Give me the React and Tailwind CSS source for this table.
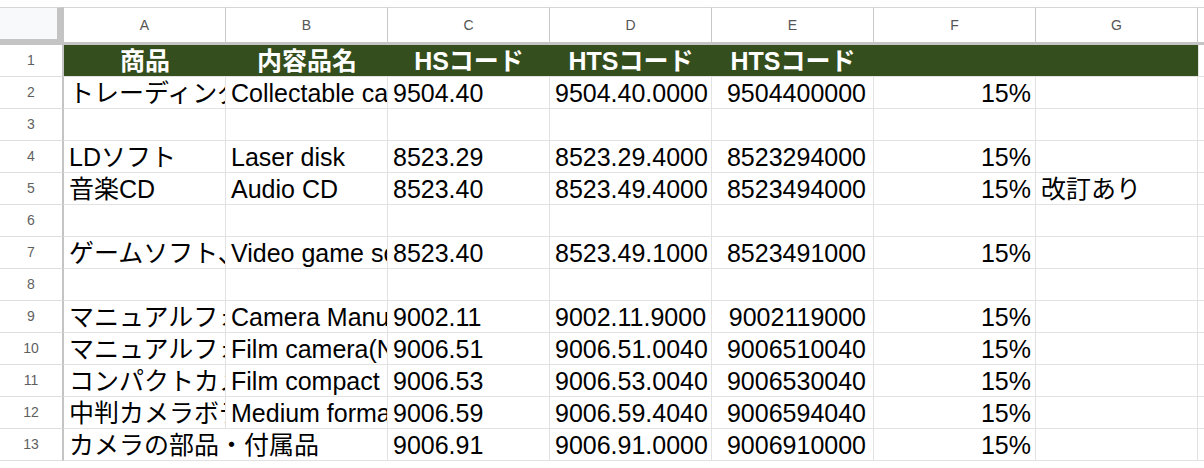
import React from 'react'

const GREEN = 'bg-[#344e1d]'

const letters = ['A', 'B', 'C', 'D', 'E', 'F', 'G']

const headings = ['商品', '内容品名', 'HSコード', 'HTSコード', 'HTSコード', '', '']

const rows = [
  { n: 2, a: 'トレーディングカード', b: 'Collectable card game', c: '9504.40', d: '9504.40.0000', e: '9504400000', f: '15%' },
  { n: 3 },
  { n: 4, a: 'LDソフト', b: 'Laser disk', c: '8523.29', d: '8523.29.4000', e: '8523294000', f: '15%' },
  { n: 5, a: '音楽CD', b: 'Audio CD', c: '8523.40', d: '8523.49.4000', e: '8523494000', f: '15%', g: '改訂あり' },
  { n: 6 },
  { n: 7, a: 'ゲームソフト、ゲーム機', b: 'Video game software', c: '8523.40', d: '8523.49.1000', e: '8523491000', f: '15%' },
  { n: 8 },
  { n: 9, a: 'マニュアルフォーカスカメラ', b: 'Camera Manual focus', c: '9002.11', d: '9002.11.9000', e: '9002119000', f: '15%' },
  { n: 10, a: 'マニュアルフォーカスフィルム', b: 'Film camera(Non-AF)', c: '9006.51', d: '9006.51.0040', e: '9006510040', f: '15%' },
  { n: 11, a: 'コンパクトカメラ', b: 'Film compact camera', c: '9006.53', d: '9006.53.0040', e: '9006530040', f: '15%' },
  { n: 12, a: '中判カメラボディ', b: 'Medium format camera', c: '9006.59', d: '9006.59.4040', e: '9006594040', f: '15%' },
  { n: 13, a: 'カメラの部品・付属品', span: true, c: '9006.91', d: '9006.91.0000', e: '9006910000', f: '15%' },
]

const RowNum = ({ n }) => (
  <div className="h-8 flex items-center justify-center border-b border-[#dedede] border-r-2 border-r-[#c4c4c4] text-[14px] text-[#5f5f5f]">
    {n}
  </div>
)

const Cell = ({ children, right, span, pr = 'pr-[5px]' }) => (
  <div
    className={`h-8 flex items-center overflow-hidden whitespace-nowrap border-b border-r border-[#e2e2e2] text-[25px] leading-[28px] text-black ${
      right ? `justify-end ${pr}` : 'pl-[5px]'
    } ${span ? 'col-span-2' : ''}`}
  >
    {children}
  </div>
)

export default function App() {
  return (
    <div className="w-[1204px] h-[468px] overflow-hidden bg-white font-['Liberation_Sans','Noto_Sans_CJK_JP',sans-serif]">
      <div className="h-[7px]" />

      {/* column letters */}
      <div className="grid grid-cols-[64px_repeat(7,162px)_1fr]">
        <div className="h-[38px] bg-[#f8f9fa] border-t border-t-[#d6d6d6] border-r-[7px] border-b-[6px] border-[#c4c4c4]" />
        {letters.map(l => (
          <div
            key={l}
            className="h-[38px] flex items-center justify-center border-t border-t-[#d6d6d6] border-r border-r-[#c9c9c9] border-b-[3px] border-b-[#c4c4c4] text-[14px] text-[#555]"
          >
            {l}
          </div>
        ))}
        <div className="h-[38px] border-t border-t-[#d6d6d6] border-b-[3px] border-b-[#c4c4c4]" />
      </div>

      {/* row 1: green heading */}
      <div className="grid grid-cols-[64px_repeat(7,162px)_1fr]">
        <RowNum n={1} />
        {headings.map((h, i) => (
          <div
            key={i}
            className={`h-8 flex items-center justify-center whitespace-nowrap overflow-hidden ${GREEN} border-b border-b-[#e2e2e2] text-[25px] leading-[28px] font-bold text-white`}
          >
            {h}
          </div>
        ))}
        <div className="h-8 border-b border-[#e2e2e2] border-l border-l-[#e2e2e2]" />
      </div>

      {rows.map(r => (
        <div key={r.n} className="grid grid-cols-[64px_repeat(7,162px)_1fr]">
          <RowNum n={r.n} />
          <Cell span={r.span}>{r.a}</Cell>
          {!r.span && <Cell>{r.b}</Cell>}
          <Cell>{r.c}</Cell>
          <Cell>{r.d}</Cell>
          <Cell right pr="pr-[7px]">{r.e}</Cell>
          <Cell right pr="pr-[4px]">{r.f}</Cell>
          <Cell>{r.g}</Cell>
          <div className="h-8 border-b border-[#e2e2e2]" />
        </div>
      ))}
    </div>
  )
}
